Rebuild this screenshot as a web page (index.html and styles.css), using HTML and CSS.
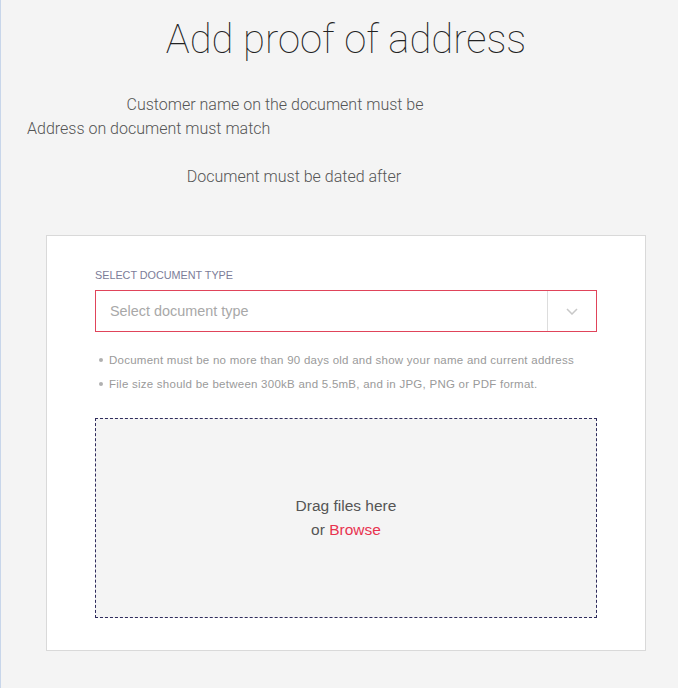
FILE: index.html
```html
<!DOCTYPE html>
<html lang="en">
<head>
<meta charset="utf-8">
<title>Add proof of address</title>
<link rel="stylesheet" href="styles.css">
</head>
<body>
<div class="page">
  <h1 class="title">Add proof of address</h1>
  <div class="requirements">
    <p class="req req-name">Customer name on the document must be</p>
    <p class="req req-address">Address on document must match</p>
    <p class="req req-date">Document must be dated after</p>
  </div>
  <section class="card">
    <label class="field-label" for="doctype">SELECT DOCUMENT TYPE</label>
    <div class="select" id="doctype">
      <span class="select-placeholder">Select document type</span>
      <span class="select-arrow">
        <svg width="12" height="7" viewBox="0 0 12 7"><polyline points="1,1 6,6 11,1" fill="none" stroke="#c8c8c8" stroke-width="1.5"/></svg>
      </span>
    </div>
    <ul class="hints">
      <li>Document must be no more than 90 days old and show your name and current address</li>
      <li>File size should be between 300kB and 5.5mB, and in JPG, PNG or PDF format.</li>
    </ul>
    <div class="dropzone">
      <div class="drop-text">
        <div>Drag files here</div>
        <div>or <a class="browse" href="#">Browse</a></div>
      </div>
    </div>
  </section>
</div>
</body>
</html>
```
FILE: styles.css
```css
html, body {
  margin: 0;
  padding: 0;
  overflow: hidden;
  background: #ffffff;
}
body {
  font-family: Roboto, "Liberation Sans", sans-serif;
  color: #555555;
}
.page {
  width: 690px;
  height: 684px;
  background: #f4f4f4;
  border-left: 1px solid #c8d6ea;
  padding-top: 16px;
  box-sizing: content-box;
}
.title {
  margin: 0;
  font-weight: 100;
  font-size: 40px;
  line-height: 48px;
  color: #222222;
  text-align: center;
}
.requirements {
  margin-top: 29px;
}
.req {
  margin: 0;
  font-size: 16px;
  font-weight: 300;
  line-height: 24px;
  color: #555555;
}
.req-name {
  text-align: center;
  padding-right: 142px;
}
.req-address {
  padding-left: 26px;
}
.req-date {
  margin-top: 24px;
  text-align: center;
  padding-right: 104px;
}
.card {
  margin: 46px 0 0 45px;
  width: 502px;
  background: #ffffff;
  border: 1px solid #d9d9d9;
  padding: 32px 48px;
  display: flex;
  flex-direction: column;
}
.field-label {
  font-family: "Liberation Sans", Arial, sans-serif;
  font-size: 10.8px;
  line-height: 14px;
  color: #7c7c98;
  margin-bottom: 8px;
}
.select {
  height: 40px;
  border: 1px solid #e0445a;
  display: flex;
  align-items: stretch;
}
.select-placeholder {
  flex: 1;
  display: flex;
  align-items: center;
  padding-left: 14px;
  font-family: "Liberation Sans", Arial, sans-serif;
  font-size: 14.4px;
  color: #a8a8a8;
}
.select-arrow {
  width: 48px;
  border-left: 1px solid #dddddd;
  display: flex;
  align-items: center;
  justify-content: center;
}
.hints {
  margin: 16px 0 22px 0;
  padding: 0 0 0 4px;
  list-style: none;
  font-family: "Liberation Sans", Arial, sans-serif;
  font-size: 11.5px;
  letter-spacing: 0.25px;
  line-height: 24px;
  color: #9a9a9a;
}
.hints li {
  display: flex;
  align-items: center;
  gap: 6px;
}
.hints li::before {
  content: "";
  width: 4px;
  height: 4px;
  border-radius: 50%;
  background: #b0b0b0;
  flex: none;
}
.dropzone {
  height: 198px;
  border: 1px dashed #2e2b5c;
  background: #f4f4f4;
  display: flex;
  align-items: center;
  justify-content: center;
}
.drop-text {
  text-align: center;
  font-family: "Liberation Sans", Arial, sans-serif;
  font-size: 15.5px;
  line-height: 24px;
  color: #555555;
}
.browse {
  color: #e8334f;
  text-decoration: none;
}
```
